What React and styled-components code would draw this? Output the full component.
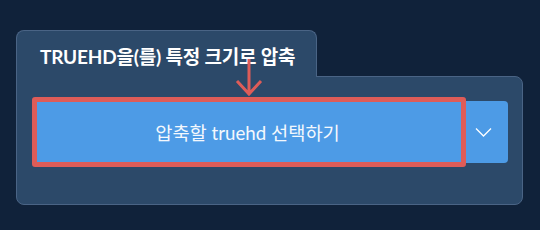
import React from 'react';
import styled, { createGlobalStyle } from 'styled-components';

const GlobalStyle = createGlobalStyle`
  html, body {
    margin: 0;
    padding: 0;
    background: #10223a;
  }
  body {
    font-family: 'Lato', 'Noto Sans CJK KR', sans-serif;
  }
`;

const Page = styled.div`
  width: 540px;
  height: 230px;
  padding: 30px 0 0 16px;
  box-sizing: border-box;
`;

const Card = styled.div`
  position: relative;
  width: 507px;
`;

const Tab = styled.div`
  position: relative;
  z-index: 1;
  width: 301px;
  height: 47px;
  box-sizing: border-box;
  background: #2c4969;
  border: 1px solid #4a6485;
  border-bottom: none;
  border-radius: 8px 8px 0 0;
  padding: 14px 0 0 23px;
  color: #ffffff;
  font-size: 19px;
  font-weight: 700;
  letter-spacing: -0.2px;
  line-height: 24px;
  white-space: nowrap;
`;

const Panel = styled.div`
  margin-top: -1px;
  height: 129px;
  box-sizing: border-box;
  background: #2c4969;
  border: 1px solid #4a6485;
  border-radius: 0 8px 8px 8px;
  padding: 24px 14px 0 16px;
`;

const Select = styled.div`
  position: relative;
  display: flex;
  height: 62px;
  background: #4d9be6;
  border-radius: 4px;
`;

const SelectLabel = styled.div`
  width: 429px;
  display: flex;
  align-items: center;
  justify-content: center;
  color: #f4f8fd;
  font-size: 18.7px;
  font-weight: 400;
  padding-bottom: 2px;
`;

const Toggle = styled.div`
  flex: 1;
  display: flex;
  align-items: center;
  justify-content: center;
  padding-right: 4px;
`;

const Highlight = styled.div`
  position: absolute;
  left: -1px;
  top: -4px;
  width: 434px;
  height: 70px;
  box-sizing: border-box;
  border: 5px solid #de5c58;
  border-radius: 3px;
  pointer-events: none;
`;

const Arrow = styled.svg`
  position: absolute;
  left: 219px;
  top: 29px;
  z-index: 2;
`;

export default function App() {
  return (
    <>
      <GlobalStyle />
      <Page>
        <Card>
          <Tab>TRUEHD을(를) 특정 크기로 압축</Tab>
          <Panel>
            <Select>
              <SelectLabel>압축할 truehd 선택하기</SelectLabel>
              <Toggle>
                <svg width="17" height="10" viewBox="0 0 17 10">
                  <path d="M1 1.5 L8.5 9 L16 1.5" fill="none" stroke="#ffffff" strokeWidth="1.3" />
                </svg>
              </Toggle>
              <Highlight />
            </Select>
          </Panel>
          <Arrow width="28" height="38" viewBox="0 0 28 38">
            <path d="M14 0 L14 35 M2 22 L14 35 L26 22" fill="none" stroke="#de5c58" strokeWidth="3" />
          </Arrow>
        </Card>
      </Page>
    </>
  );
}
